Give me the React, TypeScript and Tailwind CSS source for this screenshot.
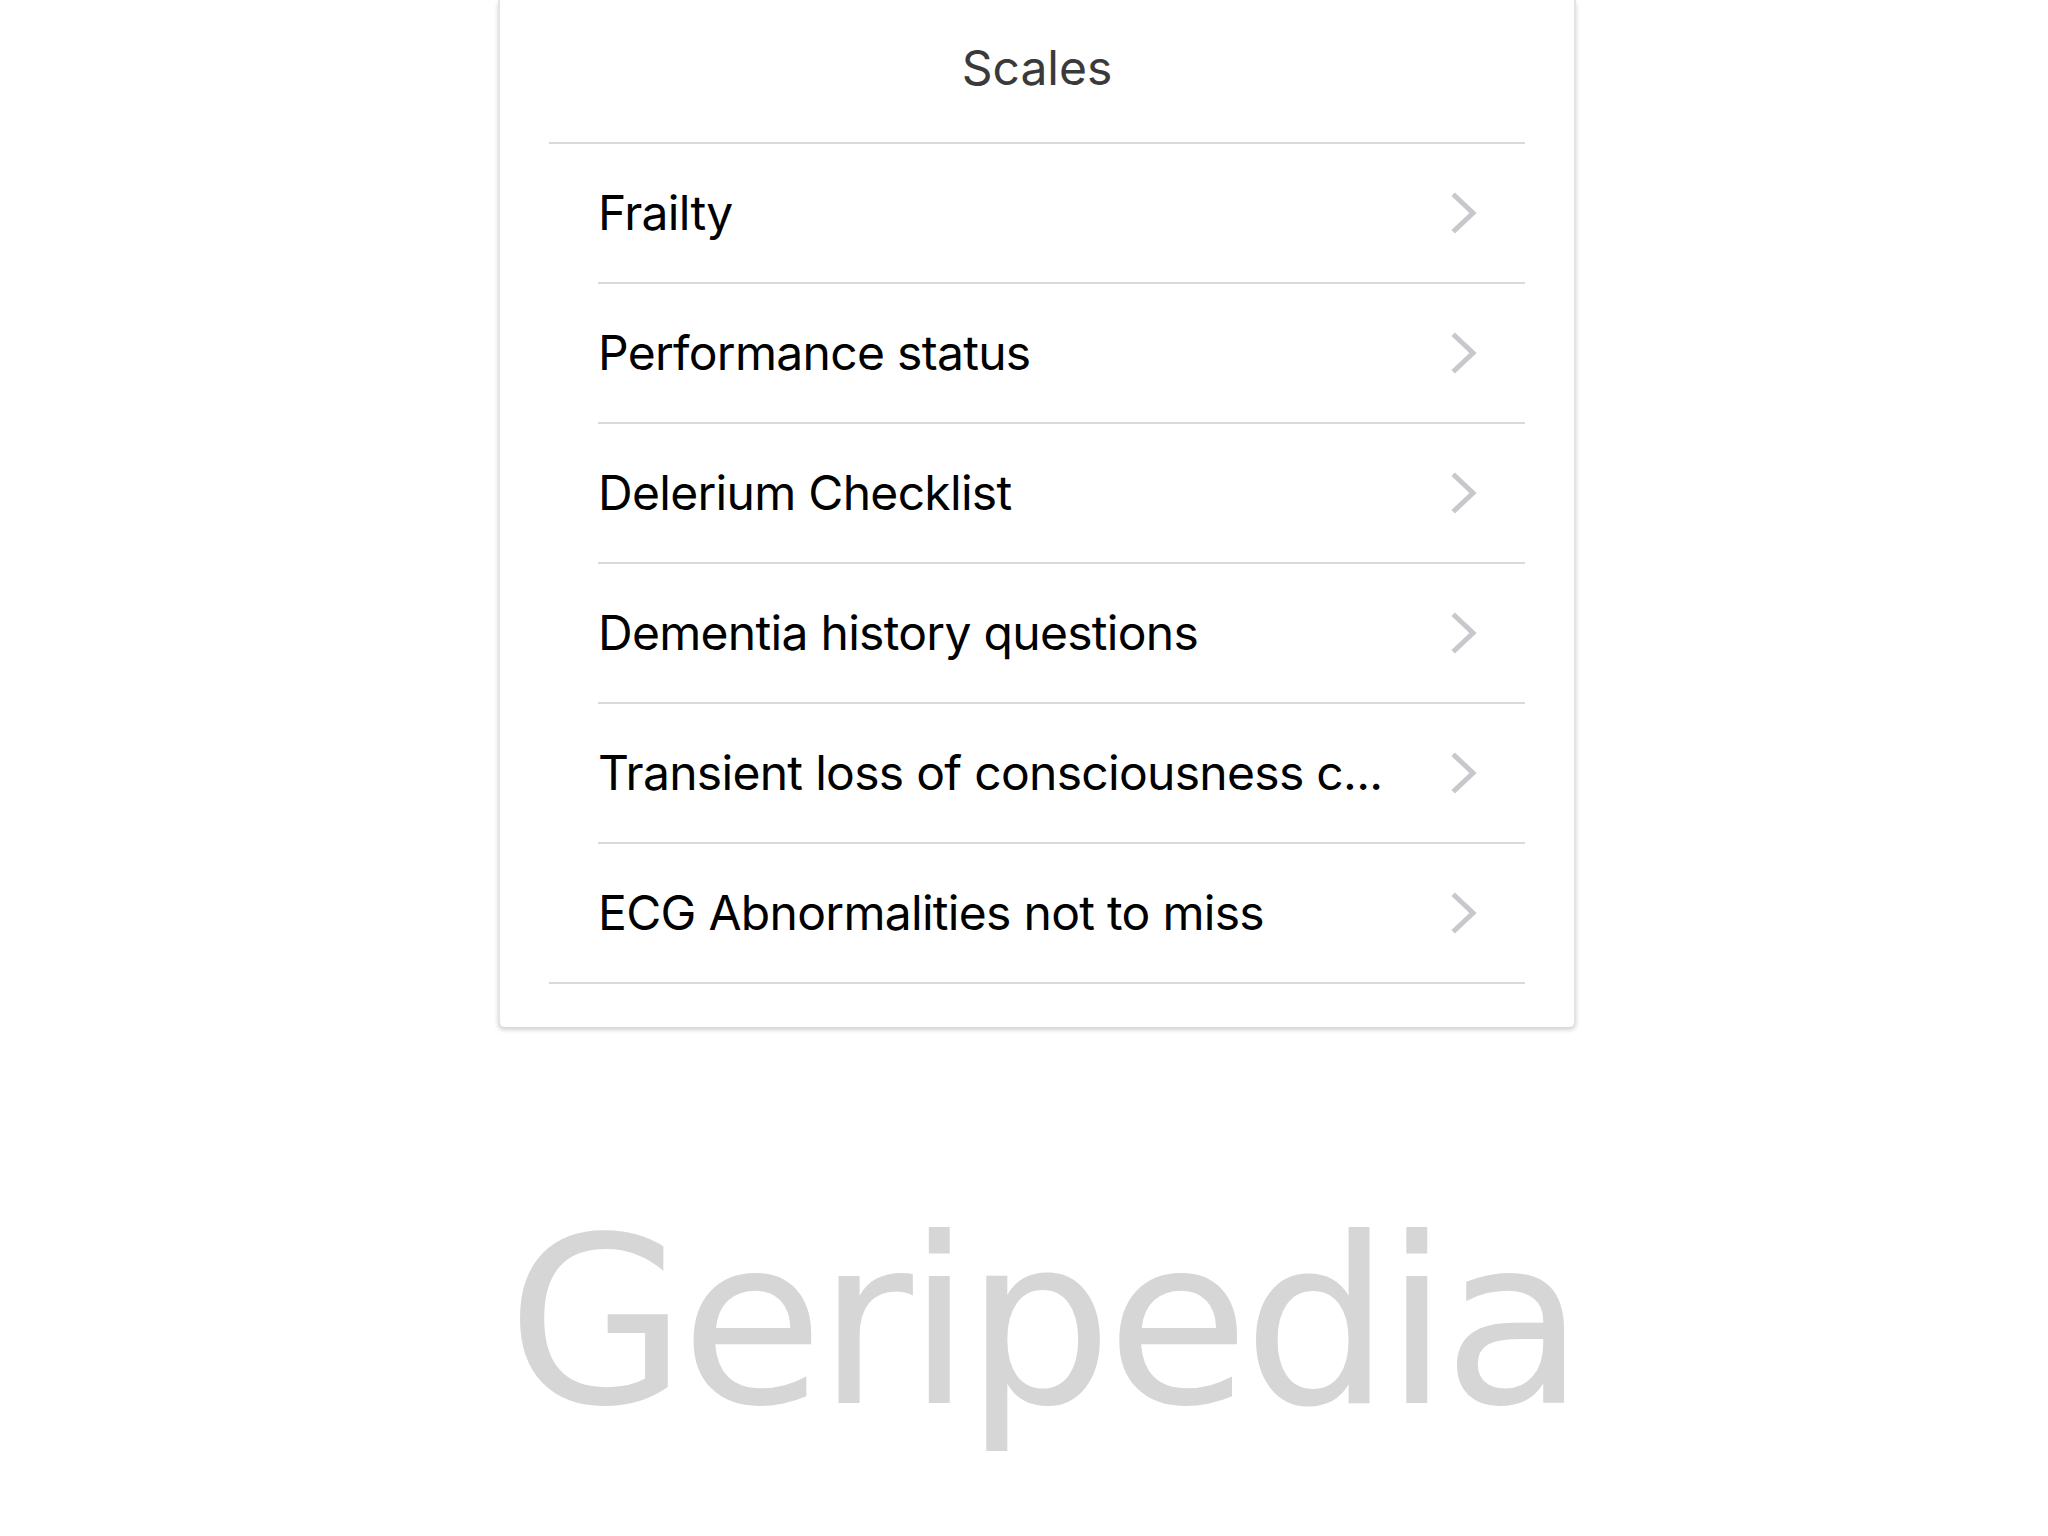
import React from "react";

const items = [
  "Frailty",
  "Performance status",
  "Delerium Checklist",
  "Dementia history questions",
  "Transient loss of consciousness c...",
  "ECG Abnormalities not to miss",
];

function Chevron() {
  return (
    <svg width="26" height="42" viewBox="0 0 26 42" className="shrink-0">
      <polyline
        points="4,4 22,21 4,38"
        fill="none"
        stroke="#c7c7cc"
        strokeWidth="5"
        strokeLinecap="square"
        strokeLinejoin="miter"
      />
    </svg>
  );
}

export default function App() {
  return (
    <div className="w-[2048px] h-[1536px] bg-white overflow-hidden flex flex-col">
      <div className="ml-[498px] w-[1078px] bg-white rounded-b-[6px] border-x-2 border-[#e4e4e4] shadow-[0_3px_4px_rgba(0,0,0,0.18)] pl-[49px] pr-[49px] pb-[43px]">
        <div
          className="h-[144px] pt-[38px] text-center text-[#3a3a3a] text-[48px] leading-[60px] border-b-2 border-[#d9d9dd]"
          style={{ fontFamily: "Inter, 'Liberation Sans', sans-serif" }}
        >
          Scales
        </div>
        <div className="border-b-2 border-[#d9d9dd]">
          {items.map((t, i) => (
            <div key={t} className="pl-[49px]">
              <div
                className={
                  "flex items-center justify-between pr-[48px] " +
                  (i < items.length - 1 ? "h-[140px] border-b-2 border-[#d9d9dd]" : "h-[138px]")
                }
              >
                <span
                  className="text-black text-[48px] leading-[60px] tracking-[-0.7px]"
                  style={{ fontFamily: "Inter, 'Liberation Sans', sans-serif" }}
                >
                  {t}
                </span>
                <Chevron />
              </div>
            </div>
          ))}
        </div>
      </div>
      <div
        className="mt-[180px] ml-[507px] text-[#d6d6d6] text-[232px] leading-[232px] tracking-[-6px] whitespace-nowrap"
        style={{ fontFamily: "'DejaVu Sans', sans-serif" }}
      >
        Geripedia
      </div>
    </div>
  );
}
